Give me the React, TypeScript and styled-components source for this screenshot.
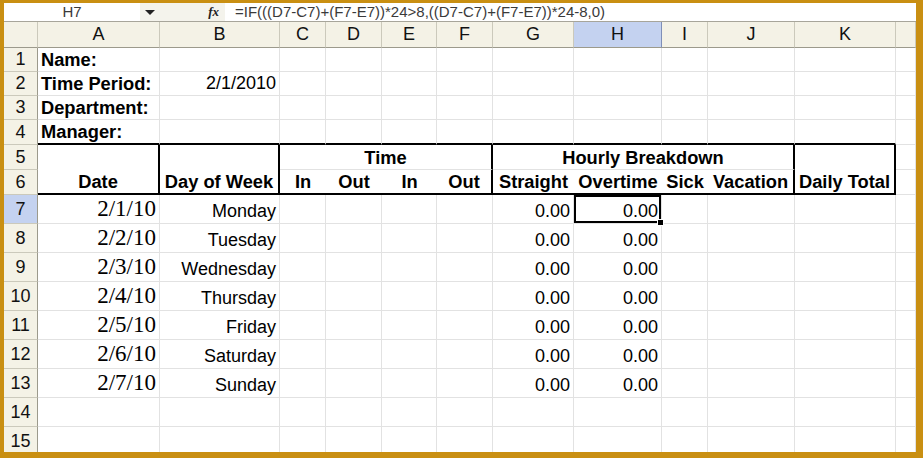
import { Fragment } from "react";
import styled, { createGlobalStyle, css } from "styled-components";

const GlobalStyle = createGlobalStyle`
    body {
        margin: 0;
        font-family: "Liberation Sans", Arial, sans-serif;
    }
`;

const COLS = [34, 122, 120, 46, 56, 55, 56, 81, 88, 46, 87, 101, 20];
const LETTERS = ["A", "B", "C", "D", "E", "F", "G", "H", "I", "J", "K", ""];
const GRID = "#e2e2e2";
const THICK = "2px solid #000";

const days = [
    ["2/1/10", "Monday"],
    ["2/2/10", "Tuesday"],
    ["2/3/10", "Wednesday"],
    ["2/4/10", "Thursday"],
    ["2/5/10", "Friday"],
    ["2/6/10", "Saturday"],
    ["2/7/10", "Sunday"],
];

const Frame = styled.div`
    width: 923px;
    height: 458px;
    box-sizing: border-box;
    padding: 3px 7px 6px 4px;
    background: #c98f12;
`;

const Window = styled.div`
    height: 100%;
    background: #fff;
    overflow: hidden;
    display: flex;
    flex-direction: column;
`;

const FormulaBar = styled.div`
    height: 18px;
    flex: none;
    display: flex;
    align-items: center;
    font-size: 15px;
    color: #3a3a3a;
    border-bottom: 1px solid #a7a59a;
`;

const NameBox = styled.div`
    width: 136px;
    text-align: center;
    line-height: 18px;
`;

const NameTools = styled.div`
    width: 85px;
    height: 18px;
    display: flex;
    align-items: center;
    justify-content: space-between;
    padding: 0 6px 0 5px;
    box-sizing: border-box;
    background: #f4f3ec;
`;

const Arrow = styled.span`
    width: 0;
    height: 0;
    border-left: 5px solid transparent;
    border-right: 5px solid transparent;
    border-top: 5px solid #222;
`;

const Fx = styled.span`
    font-family: "Liberation Serif", "Times New Roman", serif;
    font-style: italic;
    font-weight: 700;
    font-size: 13px;
    color: #222;
`;

const FormulaText = styled.div`
    flex: 1;
    padding-left: 10px;
    white-space: nowrap;
    line-height: 18px;
`;

const Sheet = styled.div`
    display: grid;
    grid-template-columns: ${COLS.map((c) => `${c}px`).join(" ")};
    grid-template-rows: 26px 24px 24px 24px 25px 25px 25px repeat(9, 29px);
`;

const headBase = css`
    background: #f4f2e6;
    display: flex;
    align-items: center;
    justify-content: center;
    font-size: 18px;
    color: #111;
    box-sizing: border-box;
`;

const ColHead = styled.div<{ $active?: boolean }>`
    ${headBase}
    border-right: 1px solid #cbc9bb;
    border-bottom: 1px solid #9c9a8c;
    ${(p) => p.$active && "background: #c4d2f0; border-right-color: #7f8fb8;"}
`;

const RowHead = styled.div<{ $active?: boolean }>`
    ${headBase}
    border-right: 1px solid #9c9a8c;
    border-bottom: 1px solid #cbc9bb;
    ${(p) => p.$active && "background: #c4d2f0;"}
`;

type CellProps = {
    $align?: "left" | "center" | "right";
    $bold?: boolean;
    $serif?: boolean;
    $cols?: number;
    $rows?: number;
    $bb?: boolean;
    $br?: boolean;
    $noR?: boolean;
    $selected?: boolean;
};

const Cell = styled.div<CellProps>`
    position: relative;
    box-sizing: border-box;
    display: flex;
    align-items: flex-end;
    justify-content: ${(p) =>
        p.$align === "right" ? "flex-end" : p.$align === "center" ? "center" : "flex-start"};
    padding: 0 3px 1px 3px;
    white-space: nowrap;
    color: #000;
    font-size: ${(p) => (p.$serif ? "23px" : p.$bold ? "18.3px" : "18px")};
    font-weight: ${(p) => (p.$bold ? 700 : 400)};
    font-family: ${(p) =>
        p.$serif
            ? `"Liberation Serif", "Times New Roman", serif`
            : `"Liberation Sans", Arial, sans-serif`};
    line-height: 1.15;
    grid-column: span ${(p) => p.$cols ?? 1};
    grid-row: span ${(p) => p.$rows ?? 1};
    border-right: ${(p) => (p.$br ? THICK : p.$noR ? "none" : `1px solid ${GRID}`)};
    border-bottom: ${(p) => (p.$bb ? THICK : `1px solid ${GRID}`)};
    ${(p) =>
        p.$selected &&
        css`
            z-index: 1;
            box-shadow: inset 0 0 0 2px #000;
            &::after {
                content: "";
                position: absolute;
                right: -3px;
                bottom: -3px;
                width: 5px;
                height: 5px;
                background: #000;
                border: 1px solid #fff;
            }
        `}
`;

function EmptyCells({ from, to, bb }: { from: number; to: number; bb?: boolean }) {
    const out = [];
    for (let i = from; i < to; i++) {
        out.push(<Cell key={i} $bb={bb && i < 11} />);
    }
    return <>{out}</>;
}

export default function App() {
    return (
        <>
            <GlobalStyle />
            <Frame>
                <Window>
                    <FormulaBar>
                        <NameBox>H7</NameBox>
                        <NameTools>
                            <Arrow />
                            <Fx>fx</Fx>
                        </NameTools>
                        <FormulaText>=IF(((D7-C7)+(F7-E7))*24&gt;8,((D7-C7)+(F7-E7))*24-8,0)</FormulaText>
                    </FormulaBar>
                    <Sheet>
                        <ColHead />
                        {LETTERS.map((l) => (
                            <ColHead key={l || "L"} $active={l === "H"}>
                                {l}
                            </ColHead>
                        ))}

                        <RowHead>1</RowHead>
                        <Cell $bold>Name:</Cell>
                        <EmptyCells from={1} to={12} />

                        <RowHead>2</RowHead>
                        <Cell $bold>Time Period:</Cell>
                        <Cell $align="right">2/1/2010</Cell>
                        <EmptyCells from={2} to={12} />

                        <RowHead>3</RowHead>
                        <Cell $bold>Department:</Cell>
                        <EmptyCells from={1} to={12} />

                        <RowHead>4</RowHead>
                        <Cell $bold $bb>
                            Manager:
                        </Cell>
                        <EmptyCells from={1} to={12} bb />

                        <RowHead>5</RowHead>
                        <Cell $rows={2} $bold $align="center" $br $bb>
                            Date
                        </Cell>
                        <Cell $rows={2} $bold $align="center" $br $bb>
                            Day of Week
                        </Cell>
                        <Cell $cols={4} $bold $align="center" $br>
                            Time
                        </Cell>
                        <Cell $cols={4} $bold $align="center" $br>
                            Hourly Breakdown
                        </Cell>
                        <Cell $rows={2} $bold $align="center" $br $bb>
                            Daily Total
                        </Cell>
                        <Cell />

                        <RowHead>6</RowHead>
                        <Cell $bold $align="center" $noR $bb>In</Cell>
                        <Cell $bold $align="center" $noR $bb>Out</Cell>
                        <Cell $bold $align="center" $noR $bb>In</Cell>
                        <Cell $bold $align="center" $br $bb>Out</Cell>
                        <Cell $bold $align="center" $noR $bb>Straight</Cell>
                        <Cell $bold $align="center" $noR $bb>Overtime</Cell>
                        <Cell $bold $align="center" $noR $bb>Sick</Cell>
                        <Cell $bold $align="center" $br $bb>Vacation</Cell>
                        <Cell />

                        {days.map(([date, day], i) => (
                            <Fragment key={date}>
                                <RowHead $active={i === 0}>{i + 7}</RowHead>
                                <Cell $serif $align="right">
                                    {date}
                                </Cell>
                                <Cell $align="right">{day}</Cell>
                                <Cell />
                                <Cell />
                                <Cell />
                                <Cell />
                                <Cell $align="right">0.00</Cell>
                                <Cell $align="right" $selected={i === 0}>
                                    0.00
                                </Cell>
                                <Cell />
                                <Cell />
                                <Cell />
                                <Cell />
                            </Fragment>
                        ))}

                        <RowHead>14</RowHead>
                        <EmptyCells from={0} to={12} />
                        <RowHead>15</RowHead>
                        <EmptyCells from={0} to={12} />
                    </Sheet>
                </Window>
            </Frame>
        </>
    );
}
